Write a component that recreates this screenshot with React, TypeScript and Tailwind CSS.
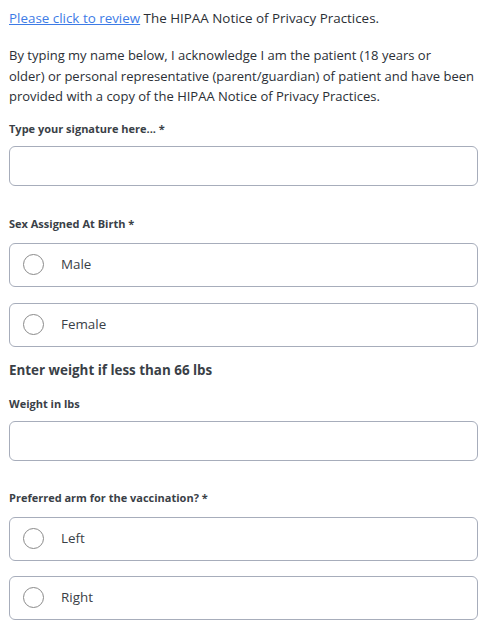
// Consent form section — HIPAA notice, signature, sex, weight, vaccination arm

const FONT = { fontFamily: '"Open Sans", "Noto Sans", Arial, sans-serif' };

function Label({ children, className = "" }: { children: React.ReactNode; className?: string }) {
  return <p className={`text-[11px] leading-4 font-bold text-[#3a3f47] ${className}`}>{children}</p>;
}

function TextBox({ className = "" }: { className?: string }) {
  return (
    <input
      type="text"
      className={`block w-full h-[40px] rounded-md border border-[#a7adbb] bg-white px-3 text-[13px] outline-none ${className}`}
    />
  );
}

function RadioRow({ label, className = "" }: { label: string; className?: string }) {
  return (
    <label className={`flex items-center h-[44px] rounded-md border border-[#a7adbb] bg-white pl-[13px] ${className}`}>
      <span className="w-[21px] h-[21px] rounded-full border border-[#8a8a8a] bg-white" />
      <span className="ml-[17px] text-[13.4px] text-[#3a3f47]">{label}</span>
    </label>
  );
}

export default function App() {
  return (
    <div className="min-h-screen bg-white pl-[9px] pr-[12px] pt-2 text-[#2b2f36]" style={FONT}>
      <p className="text-[13.4px] leading-5">
        <a href="#" className="text-[#3d7be6] underline">Please click to review</a> The HIPAA Notice of Privacy Practices.
      </p>

      <p className="mt-[17px] text-[13px] leading-[20.5px] whitespace-nowrap">
        By typing my name below, I acknowledge I am the patient (18 years or
        <br />
        older) or personal representative (parent/guardian) of patient and have been
        <br />
        provided with a copy of the HIPAA Notice of Privacy Practices.
      </p>

      <Label className="mt-[14px]">Type your signature here... *</Label>
      <TextBox className="mt-[9px]" />

      <Label className="mt-[30px]">Sex Assigned At Birth *</Label>
      <div className="mt-[11px] flex flex-col gap-4">
        <RadioRow label="Male" />
        <RadioRow label="Female" />
      </div>

      <p className="mt-[13px] text-[13.4px] leading-5 font-bold text-[#3a3f47]">Enter weight if less than 66 lbs</p>

      <Label className="mt-[16px]">Weight in lbs</Label>
      <TextBox className="mt-[9px]" />

      <Label className="mt-[29px]">Preferred arm for the vaccination? *</Label>
      <div className="mt-[11px] flex flex-col gap-[15px]">
        <RadioRow label="Left" />
        <RadioRow label="Right" />
      </div>
    </div>
  );
}
